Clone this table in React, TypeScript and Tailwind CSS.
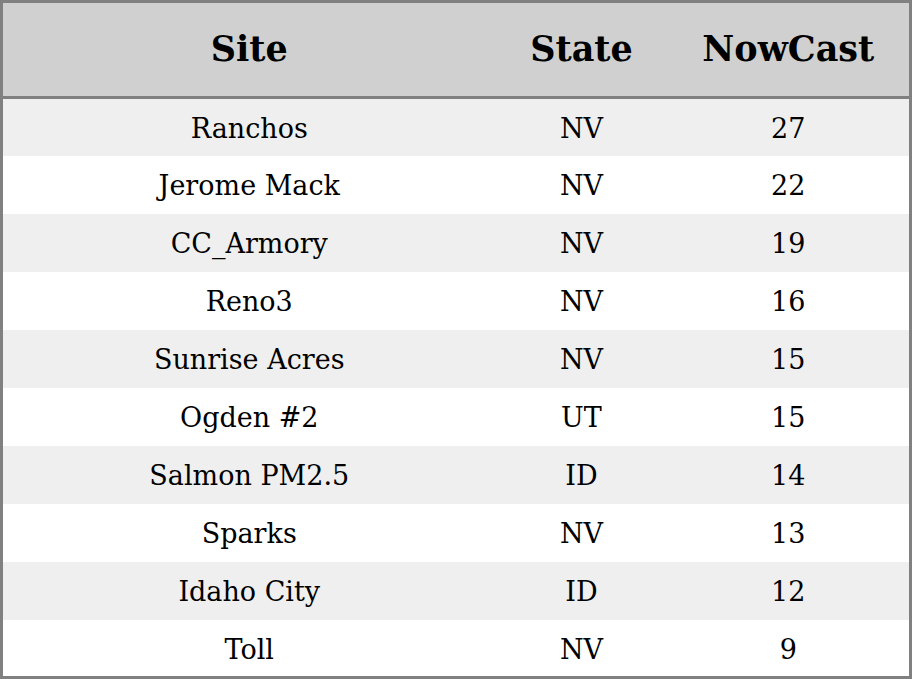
const rows = [
    { site: "Ranchos", state: "NV", nowcast: 27 },
    { site: "Jerome Mack", state: "NV", nowcast: 22 },
    { site: "CC_Armory", state: "NV", nowcast: 19 },
    { site: "Reno3", state: "NV", nowcast: 16 },
    { site: "Sunrise Acres", state: "NV", nowcast: 15 },
    { site: "Ogden #2", state: "UT", nowcast: 15 },
    { site: "Salmon PM2.5", state: "ID", nowcast: 14 },
    { site: "Sparks", state: "NV", nowcast: 13 },
    { site: "Idaho City", state: "ID", nowcast: 12 },
    { site: "Toll", state: "NV", nowcast: 9 },
];

export default function App() {
    return (
        <div className="w-[912px] h-[679px] bg-white font-['DejaVu_Serif',serif] text-black">
            <table className="w-full border-collapse border-[3px] border-[#808080]">
                {/* Head */}
                <thead>
                    <tr className="bg-[#d0d0d0] h-[96px] border-b-[3px] border-[#808080]">
                        <th className="w-[494px] text-[35px] font-bold">Site</th>
                        <th className="w-[172px] text-[35px] font-bold">State</th>
                        <th className="text-[35px] font-bold">NowCast</th>
                    </tr>
                </thead>
                <tbody>
                    {rows.map((row, index) => (
                        <tr key={index} className={`h-[58px] text-[27px] text-center ${index % 2 === 0 ? "bg-[#efefef]" : "bg-white"}`}>
                            <td className="pt-[4px]">{row.site}</td>
                            <td className="pt-[4px]">{row.state}</td>
                            <td className="pt-[4px]">{row.nowcast}</td>
                        </tr>
                    ))}
                </tbody>
            </table>
        </div>
    );
}
